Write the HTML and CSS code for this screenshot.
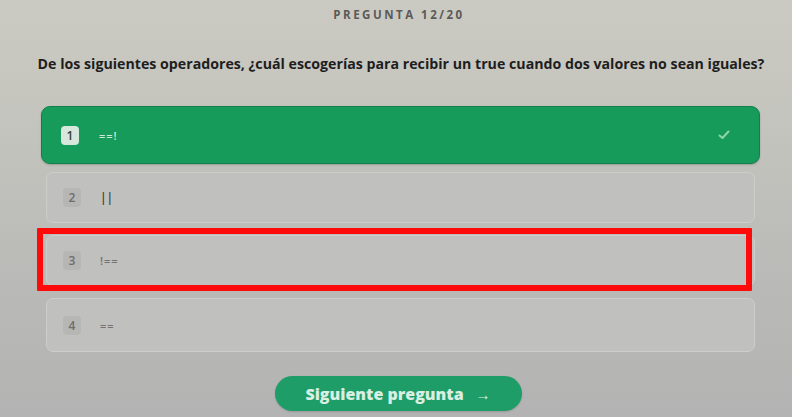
FILE: index.html
```html
<!DOCTYPE html>
<html lang="es">
<head>
<meta charset="utf-8">
<title>Pregunta 12/20</title>
<link rel="stylesheet" href="styles.css">
</head>
<body>
<main class="quiz">
  <div class="counter">PREGUNTA 12/20</div>
  <h1 class="question">De los siguientes operadores, ¿cuál escogerías para recibir un true cuando dos valores no sean iguales?</h1>
  <ul class="options">
    <li class="option option-correct">
      <span class="badge">1</span>
      <span class="answer">==!</span>
      <svg class="check" width="12" height="10" viewBox="0 0 12 10"><path d="M1.5 5.5 L4.5 8 L10.5 1.5" fill="none" stroke="#8fd3ae" stroke-width="2" stroke-linecap="round" stroke-linejoin="round"/></svg>
    </li>
    <li class="option">
      <span class="badge">2</span>
      <span class="answer answer-dark">||</span>
    </li>
    <li class="option option-marked">
      <span class="badge">3</span>
      <span class="answer">!==</span>
    </li>
    <li class="option option-last">
      <span class="badge">4</span>
      <span class="answer">==</span>
    </li>
  </ul>
  <div class="actions">
    <button class="next">Siguiente pregunta <span class="arrow">→</span></button>
  </div>
</main>
</body>
</html>
```

FILE: styles.css
```css
html, body {
  margin: 0;
  padding: 0;
}
body {
  width: 792px;
  height: 417px;
  overflow: hidden;
  background: linear-gradient(180deg, #cbcac2 0%, #c4c4be 30%, #bbbbb8 60%, #b3b3b3 100%);
  font-family: "Open Sans", "Noto Sans", sans-serif;
}
.quiz {
  display: flex;
  flex-direction: column;
  padding: 7px 0 0;
}
.counter {
  text-align: center;
  font-size: 11.5px;
  font-weight: 700;
  letter-spacing: 2.5px;
  color: #5a5a58;
  line-height: 16px;
  padding-left: 6px;
}
.question {
  margin: 32px 0 0;
  text-align: center;
  font-size: 14.2px;
  font-weight: 700;
  color: #1e1e1e;
  line-height: 18px;
  padding-left: 10px;
}
.options {
  list-style: none;
  margin: 33px 0 0;
  padding: 0 37px 0 46px;
  display: flex;
  flex-direction: column;
  gap: 12px;
}
.option {
  position: relative;
  display: flex;
  align-items: center;
  height: 49px;
  padding: 0 15px;
  border: 1px solid #cdcdca;
  border-radius: 7px;
  background: #c0c0be;
  color: #6a6a6a;
}
.option-correct {
  margin: 0 -5px -4px;
  height: 56px;
  padding: 0 18px;
  border: 1px solid #11804a;
  border-radius: 9px;
  background: #169b5b;
  box-shadow: 0 1px 2px rgba(0,0,0,0.2);
  color: #e6f5ea;
}
.option-last {
  height: 52px;
}
.badge {
  width: 18px;
  height: 19px;
  border-radius: 4px;
  background: #b6b6b4;
  color: #6e6e6e;
  font-size: 12px;
  font-weight: 600;
  display: flex;
  align-items: center;
  justify-content: center;
  margin-left: 1px;
}
.option-correct .badge {
  background: #d7e7dc;
  color: #3b3b3b;
}
.answer {
  margin-left: 19px;
  font-size: 11px;
  font-weight: 600;
  letter-spacing: 1px;
  color: #727272;
}
.option-correct .answer {
  margin-left: 20px;
  color: #cde9d6;
}
.answer-dark {
  color: #3c3c3c;
  font-size: 12px;
  letter-spacing: 0;
}
.check {
  margin-left: auto;
  margin-right: 11px;
}
.option-marked::after {
  content: "";
  position: absolute;
  top: -8px;
  bottom: -6px;
  left: -10px;
  right: 2px;
  border: 6px solid #ff0a0a;
  border-radius: 1px;
  pointer-events: none;
}
.actions {
  display: flex;
  justify-content: center;
  margin-top: 24px;
  padding-left: 4px;
}
.next {
  width: 247px;
  height: 35px;
  border: none;
  border-radius: 18px;
  background: #1f9d69;
  color: #d8efe2;
  font-family: "Open Sans", "Noto Sans", sans-serif;
  font-size: 16px;
  font-weight: 800;
  display: flex;
  align-items: center;
  justify-content: center;
  gap: 12px;
  box-shadow: 0 1px 2px rgba(0,0,0,0.15);
}
.arrow {
  font-size: 15px;
  font-weight: 800;
}
```
